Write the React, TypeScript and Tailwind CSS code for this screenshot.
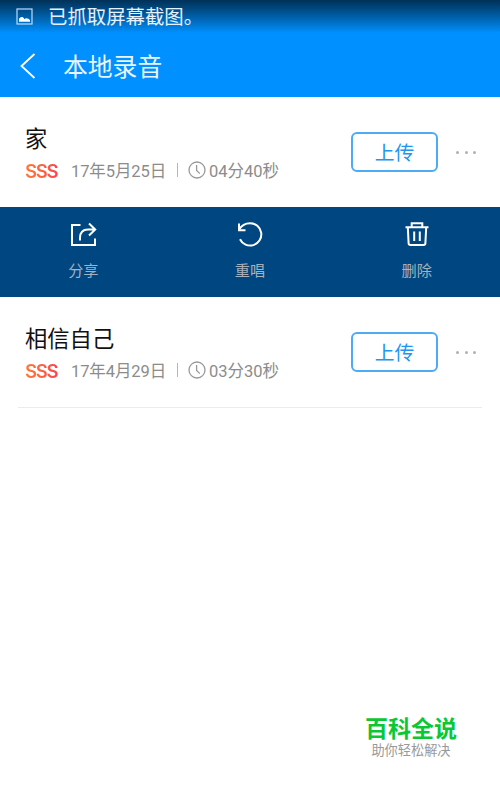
import type { ReactNode } from 'react'

interface Recording {
  title: string
  date: string
  duration: string
}

const first: Recording = { title: '家', date: '17年5月25日', duration: '04分40秒' }
const second: Recording = { title: '相信自己', date: '17年4月29日', duration: '03分30秒' }

function ClockIcon() {
  return (
    <svg className="-mt-[5px] ml-[10px] h-[18px] w-[18px] text-[#999]" viewBox="0 0 18 18" fill="none" stroke="currentColor" strokeWidth="1.3">
      <circle cx="9" cy="9" r="8" />
      <path d="M8.6 4v5.4l3.2 3.2" />
    </svg>
  )
}

function RecordingRow({ item }: { item: Recording }) {
  return (
    <div className="flex h-[110px] pl-[25px]">
      <div className="w-[326px] pt-[27px]">
        <h2 className="h-[31px] text-[22.3px] leading-[31px] text-[#111]">{item.title}</h2>
        <div className="mt-[5px] flex h-6 items-center whitespace-nowrap text-[16.5px] text-[#8c8c8c]">
          <span className="-mt-[2px] w-[46px] bg-linear-to-r from-[#ff7a30] to-[#ff3c50] to-75% bg-clip-text font-['Inter'] text-[18.5px] leading-6 font-semibold tracking-[-1.3px] text-transparent">
            SSS
          </span>
          <span className="w-[106px] tracking-[-0.1px]">{item.date}</span>
          <span className="-mt-[4px] h-[14px] w-px bg-[#b5b5b5]" />
          <ClockIcon />
          <span className="ml-[3px]">{item.duration}</span>
        </div>
      </div>
      <button className="mt-[35px] h-[40px] w-[87px] rounded-[6px] border-2 border-[#4dabf5] pt-[2px] text-[19.8px] leading-[35px] text-[#2196f0]">
        上传
      </button>
      <div className="mt-[54px] ml-[18px] flex gap-[5.5px]">
        <span className="size-[3px] rounded-full bg-[#b0b0b0]" />
        <span className="size-[3px] rounded-full bg-[#b0b0b0]" />
        <span className="size-[3px] rounded-full bg-[#b0b0b0]" />
      </div>
    </div>
  )
}

function Action({ label, children }: { label: string; children: ReactNode }) {
  return (
    <button className="flex flex-1 flex-col items-center pt-[12px]">
      <svg className="h-[28px] w-[28px] text-white" viewBox="0 0 28 28" fill="none" stroke="currentColor" strokeWidth="2">
        {children}
      </svg>
      <span className="mt-[13px] text-[15.2px] leading-[22px] text-[#a6b1bb]">{label}</span>
    </button>
  )
}

export default function App() {
  return (
    <div className="h-[789px] w-[500px] overflow-hidden bg-white font-['Roboto','Noto_Sans_CJK_SC',sans-serif]">
      {/* Status bar + header */}
      <header className="h-[97px] bg-[#0090ff] bg-linear-to-b from-[#003158] to-[#0090ff] to-34% text-white">
        <div className="flex h-[33px] items-center pl-4">
          <svg className="h-[17px] w-[17px]" viewBox="0 0 17 17">
            <rect x="1" y="1" width="15" height="15" fill="none" stroke="#b9dcf8" strokeWidth="1.2" />
            <path d="M3 13.8v-3q1.5-2.3 3.4-1.8 1.2.4 2 2.2 1.2-1.4 3-.7 1.6.3 2.6 1.8v1.5z" fill="#fff" />
          </svg>
          <span className="mt-[2px] ml-[15px] text-[19.4px] leading-[30px] text-[#e5f2fd]">已抓取屏幕截图。</span>
        </div>
        <div className="flex h-16 items-center pl-5">
          <svg className="mt-[2px] h-[26px] w-4" viewBox="0 0 16 26" fill="none" stroke="#fff" strokeWidth="1.8">
            <path d="M14.5 1L1.5 13l13 12" />
          </svg>
          <h1 className="mt-[6px] ml-[27px] text-[24.8px] leading-9 text-[#e9f5ff]">本地录音</h1>
        </div>
      </header>

      <RecordingRow item={first} />

      {/* Actions of the opened row */}
      <div className="flex h-[90px] bg-[#004781]">
        <Action label="分享">
          <path d="M11.5 6H3v20h23v-6.5" />
          <path d="M11 21.5V19Q11 10.5 19 10.5h7M20 4.5l6.2 6-6.2 6" />
        </Action>
        <Action label="重唱">
          <path d="M3.2 10.5C5.5 6.5 9.5 4.2 14 4.2A11.2 11.2 0 1 1 4 20.2" />
          <path d="M3 4.5v6.8h6.5" />
        </Action>
        <Action label="删除">
          <path d="M2.5 8.3h23M8.7 8.3V4.2h10.6v4.1M4.8 8.3l.8 16q.1 1.7 1.8 1.7h13.2q1.7 0 1.8-1.7l.8-16M11.2 12.5v9.5M16.8 12.5v9.5" />
        </Action>
      </div>

      <div className="mx-[18px] h-[111px] border-b border-[#ececec]">
        <div className="-mx-[18px]">
          <RecordingRow item={second} />
        </div>
      </div>

      <footer className="mt-[305px] ml-[365px] w-[92px] text-center whitespace-nowrap">
        <p className="text-[23px] leading-[34px] font-bold text-[#0ac736]">百科全说</p>
        <p className="-mt-[6px] text-[13.2px] leading-5 text-[#999]">助你轻松解决</p>
      </footer>
    </div>
  )
}
